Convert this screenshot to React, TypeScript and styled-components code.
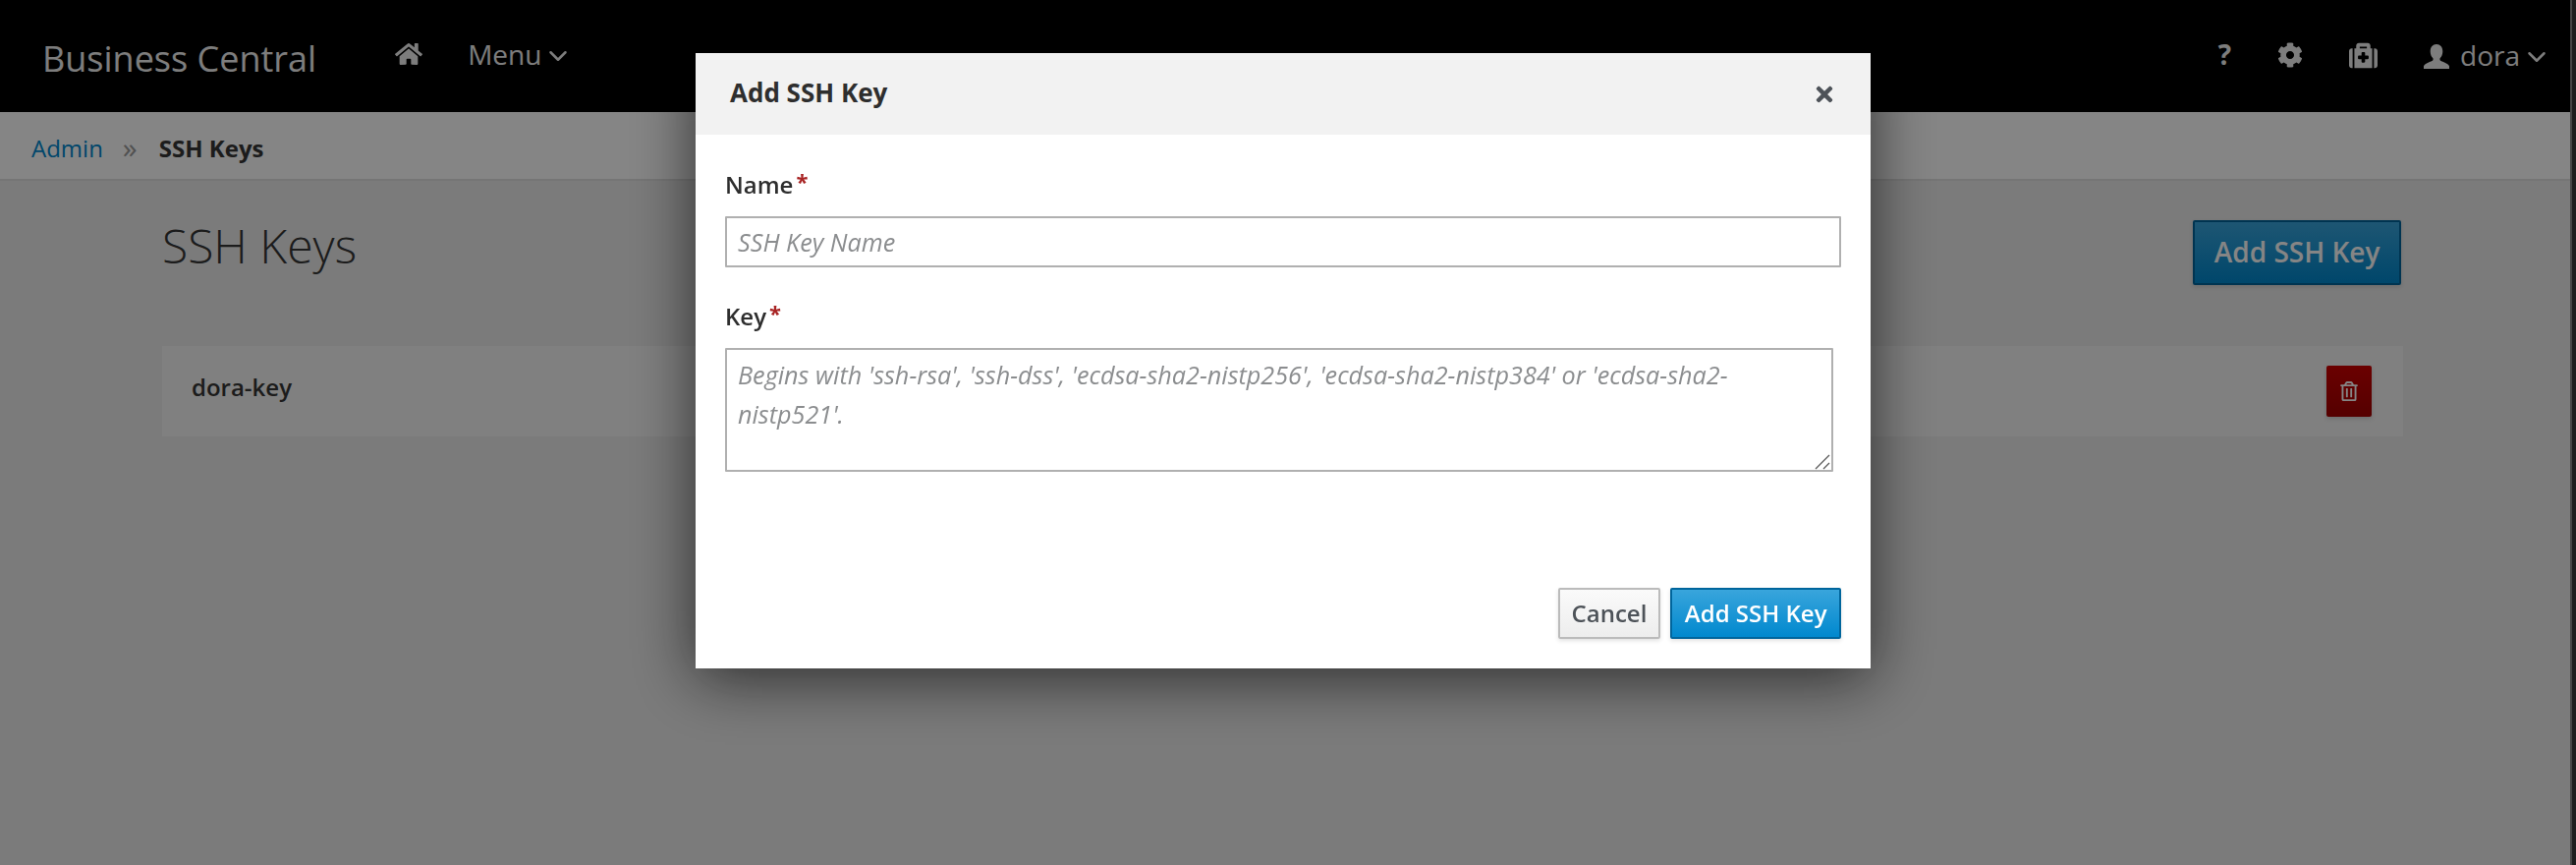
import React from "react";
import styled, { createGlobalStyle } from "styled-components";
import { FaHome, FaCog, FaMedkit, FaRegTrashAlt, FaTimes } from "react-icons/fa";
import { FiChevronDown } from "react-icons/fi";

const GlobalStyle = createGlobalStyle`
  html, body {
    margin: 0;
    height: 100%;
    overflow: hidden;
    background: #ebebeb;
    font-family: "Open Sans", "Liberation Sans", sans-serif;
    color: #363636;
  }
  * { box-sizing: border-box; }
`;

const UserIcon = () => (
  <svg width="26" height="25" viewBox="0 0 26 25" fill="currentColor">
    <path d="M13 0c3.800 0 6.300 3 6.300 7.200 0 2.900-1 5.400-2.500 6.900-.5.5-.5 1.700 0 2.300 1.400 1.300 8.200 2.600 9.200 5.800v2.800H0v-2.800c1-3.200 7.800-4.500 9.200-5.800.5-.6.5-1.800 0-2.300C7.700 12.600 6.700 10.100 6.700 7.200 6.700 3 9.200 0 13 0z" />
  </svg>
);

const App = () => {
  return (
    <>
      <GlobalStyle />
      <Page>
        <TopBar>
          <Brand>Business Central</Brand>
          <HomeLink><FaHome /></HomeLink>
          <NavMenu>Menu<FiChevronDown /></NavMenu>
          <Utilities>
            <HelpMark>?</HelpMark>
            <UtilityIcon $size={26}><FaCog /></UtilityIcon>
            <UtilityIcon $size={29}><FaMedkit /></UtilityIcon>
            <UserMenu><UserIcon />dora<FiChevronDown /></UserMenu>
          </Utilities>
        </TopBar>
        <Breadcrumb>
          <CrumbLink>Admin</CrumbLink>
          <CrumbSeparator>»</CrumbSeparator>
          <CrumbCurrent>SSH Keys</CrumbCurrent>
        </Breadcrumb>
        <Content>
          <TitleRow>
            <PageTitle>SSH Keys</PageTitle>
            <PrimaryButton $large>Add SSH Key</PrimaryButton>
          </TitleRow>
          <KeyRow>
            <KeyName>dora-key</KeyName>
            <DeleteButton><FaRegTrashAlt /></DeleteButton>
          </KeyRow>
        </Content>
      </Page>
      <Backdrop>
        <Modal>
          <ModalHeader>
            <ModalTitle>Add SSH Key</ModalTitle>
            <CloseButton><FaTimes /></CloseButton>
          </ModalHeader>
          <ModalBody>
            <Label>Name<Required>*</Required></Label>
            <NameInput placeholder="SSH Key Name" />
            <Label>Key<Required>*</Required></Label>
            <KeyAreaWrap>
              <KeyArea placeholder="Begins with 'ssh-rsa', 'ssh-dss', 'ecdsa-sha2-nistp256', 'ecdsa-sha2-nistp384' or 'ecdsa-sha2-nistp521'." />
              <ResizeGrip width="16" height="16" viewBox="0 0 16 16">
                <path d="M1 15 15 1M9 15l6-6" stroke="#5a5a5a" strokeWidth="1.3" fill="none" />
              </ResizeGrip>
            </KeyAreaWrap>
          </ModalBody>
          <ModalFooter>
            <DefaultButton>Cancel</DefaultButton>
            <PrimaryButton>Add SSH Key</PrimaryButton>
          </ModalFooter>
        </Modal>
        <ScrollTrack />
      </Backdrop>
    </>
  );
};

export default App;

const Page = styled.div`
  height: 880px;
  display: flex;
  flex-direction: column;
`;

const TopBar = styled.header`
  height: 114px;
  flex: none;
  background: #000000;
  display: flex;
  align-items: center;
  padding: 0 32px 0 43px;
  color: #f0f0f0;
`;

const Brand = styled.div`
  font-size: 36px;
  margin-right: 80px;
  position: relative;
  top: 2px;
`;

const HomeLink = styled.a`
  font-size: 28px;
  display: flex;
  margin: -4px 46px 0 0;
`;

const NavMenu = styled.a`
  font-size: 28px;
  display: flex;
  align-items: center;
  margin-top: -4px;
  svg { font-size: 30px; margin: 4px -7px 0 2px; }
`;

const Utilities = styled.div`
  margin-left: auto;
  display: flex;
  align-items: center;
  gap: 47px;
`;

const HelpMark = styled.span`
  font-size: 28px;
  font-weight: 700;
  margin-top: -4px;
`;

const UtilityIcon = styled.span<{ $size: number }>`
  font-size: ${(p) => p.$size}px;
  display: flex;
  margin-top: -2px;
`;

const UserMenu = styled.a`
  font-size: 28px;
  display: flex;
  align-items: center;
  margin-top: -3px;
  > svg:first-child { margin-right: 11px; margin-top: 3px; }
  > svg:last-child { font-size: 30px; margin: 5px -7px 0 2px; }
`;

const Breadcrumb = styled.nav`
  height: 70px;
  flex: none;
  background: #ffffff;
  border-bottom: 2px solid #e0e0e0;
  display: flex;
  align-items: center;
  padding: 4px 0 0 32px;
  font-size: 24px;
`;

const CrumbLink = styled.a`
  color: #0088ce;
`;

const CrumbSeparator = styled.span`
  color: #9c9c9c;
  font-size: 30px;
  margin: -2px 22px 0 20px;
`;

const CrumbCurrent = styled.span`
  font-weight: 700;
  color: #363636;
`;

const Content = styled.main`
  flex: 1;
  background: #ebebeb;
  padding: 40px 176px 0 165px;
`;

const TitleRow = styled.div`
  display: flex;
  justify-content: space-between;
  align-items: flex-start;
  margin-bottom: 62px;
`;

const PageTitle = styled.h1`
  margin: 0;
  font-size: 48px;
  font-weight: 300;
  line-height: 52px;
  color: #363636;
`;

const PrimaryButton = styled.button<{ $large?: boolean }>`
  height: ${(p) => (p.$large ? "66px" : "52px")};
  padding: 0 ${(p) => (p.$large ? "19.5px" : "12.5px")} 2px;
  margin-right: ${(p) => (p.$large ? "2px" : "0")};
  font-family: inherit;
  font-size: ${(p) => (p.$large ? "28px" : "24px")};
  font-weight: 600;
  color: #ffffff;
  background: linear-gradient(#39a5dc, #0088ce);
  border: 2px solid #00659c;
  border-radius: 2px;
  box-shadow: 0 2px 4px rgba(3, 3, 3, 0.12);
`;

const DefaultButton = styled.button`
  height: 52px;
  padding: 0 12px 2px;
  font-family: inherit;
  font-size: 24px;
  font-weight: 600;
  color: #4d5258;
  background: linear-gradient(#fafafa, #ededed);
  border: 2px solid #bbbbbb;
  border-radius: 2px;
  box-shadow: 0 2px 4px rgba(3, 3, 3, 0.12);
`;

const KeyRow = styled.div`
  height: 92px;
  background: #f5f5f5;
  display: flex;
  align-items: center;
  justify-content: space-between;
  padding: 0 32px 0 30px;
`;

const KeyName = styled.div`
  font-size: 24px;
  font-weight: 600;
  margin-top: -10px;
`;

const DeleteButton = styled.button`
  width: 46px;
  height: 52px;
  padding: 0;
  display: flex;
  align-items: center;
  justify-content: center;
  font-size: 20px;
  color: #ffffff;
  background: linear-gradient(#cc0000, #a30000);
  border: none;
  border-radius: 2px;
  box-shadow: 0 2px 4px rgba(3, 3, 3, 0.15);
`;

const Backdrop = styled.div`
  position: fixed;
  inset: 0;
  background: rgba(0, 0, 0, 0.48);
  overflow: hidden;
`;

const ScrollTrack = styled.div`
  position: absolute;
  top: 0;
  right: 0;
  bottom: 0;
  width: 6px;
  background: #1e1e1e;
  border-left: 2px solid rgba(255, 255, 255, 0.18);
`;

const Modal = styled.section`
  width: 1196px;
  height: 626px;
  margin: 54px 0 0 708px;
  background: #ffffff;
  display: flex;
  flex-direction: column;
  box-shadow: 0 10px 60px rgba(0, 0, 0, 0.65);
`;

const ModalHeader = styled.div`
  height: 83px;
  flex: none;
  background: #f2f2f2;
  display: flex;
  align-items: center;
  justify-content: space-between;
  padding: 0 35px 0 35px;
`;

const ModalTitle = styled.h4`
  margin: -3px 0 0;
  font-size: 26px;
  font-weight: 700;
  color: #2e2e2e;
`;

const CloseButton = styled.span`
  font-size: 24px;
  display: flex;
  color: #4d5258;
`;

const ModalBody = styled.div`
  flex: 1;
  padding: 34px 30px 0 30px;
  display: flex;
  flex-direction: column;
  align-items: flex-start;
`;

const Label = styled.label`
  font-size: 24px;
  font-weight: 600;
  line-height: 34px;
  color: #2e2e2e;
  margin-bottom: 15px;
`;

const Required = styled.span`
  color: #a82424;
  font-size: 22px;
  font-weight: 700;
  margin-left: 3px;
  vertical-align: 4px;
  line-height: 1;
`;

const NameInput = styled.input`
  width: 100%;
  height: 52px;
  padding: 0 11px;
  font-family: inherit;
  font-size: 25.2px;
  border: 2px solid #b0b0b0;
  border-radius: 1px;
  margin-bottom: 33px;
  outline: none;
  &::placeholder { color: #8b8d8f; font-style: italic; }
`;

const KeyAreaWrap = styled.div`
  position: relative;
  display: flex;
  width: 1128px;
`;

const KeyArea = styled.textarea`
  width: 100%;
  height: 126px;
  padding: 5px 11px;
  font-family: inherit;
  font-size: 25.2px;
  line-height: 40px;
  border: 2px solid #b0b0b0;
  border-radius: 1px;
  outline: none;
  resize: none;
  &::placeholder { color: #8b8d8f; font-style: italic; }
`;

const ResizeGrip = styled.svg`
  position: absolute;
  right: 3px;
  bottom: 2px;
`;

const ModalFooter = styled.div`
  height: 82px;
  flex: none;
  display: flex;
  justify-content: flex-end;
  gap: 10px;
  padding-right: 30px;
`;
